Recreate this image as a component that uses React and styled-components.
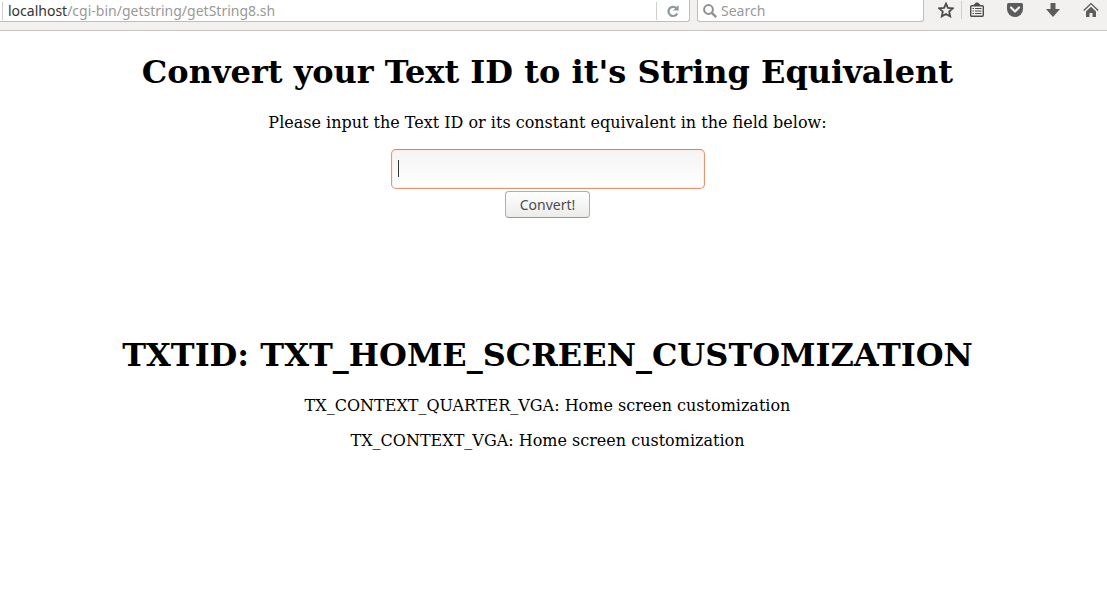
import React from "react";
import styled, { createGlobalStyle } from "styled-components";

const GlobalStyle = createGlobalStyle`
  * { box-sizing: border-box; }
  body {
    margin: 0;
    background: #fff;
    color: #000;
    font: 16px/19px "DejaVu Serif", serif;
  }
`;

const ui = `"Noto Sans", "Open Sans", sans-serif`;

const Toolbar = styled.header`
  display: flex;
  align-items: flex-start;
  height: 31px;
  background: #f2f1f0;
  border-bottom: 1px solid #c6c3c0;
  font: 14px/20px ${ui};
`;

const Field = styled.div`
  display: flex;
  align-items: center;
  height: 22px;
  background: #fff;
  border: 1px solid #c0bdba;
  border-top: 0;
  border-radius: 0 0 3px 3px;
`;

const AddressBar = styled(Field)`
  flex: 1;
  min-width: 0;
  border-left: 0;
  border-bottom-left-radius: 0;
`;

const SearchBar = styled(Field)`
  width: 227px;
  margin-left: 7px;
  padding-left: 4px;
  gap: 3px;
`;

const Divider = styled.span`
  flex: none;
  width: 1px;
  height: 18px;
  margin-left: ${(p) => p.$before || 0}px;
  background: #d0cecc;
`;

const Host = styled.label`
  padding-left: 5px;
  color: #333;
`;

const BarInput = styled.input`
  flex: 1;
  min-width: 0;
  height: 20px;
  padding: 0;
  border: 0;
  outline: 0;
  background: none;
  color: #999;
  font: inherit;

  &::placeholder {
    color: #999;
    opacity: 1;
  }
`;

const IconButton = styled.button`
  display: flex;
  flex: none;
  align-items: center;
  justify-content: center;
  width: ${(p) => p.$width || 16}px;
  height: 20px;
  padding: 0;
  border: 0;
  background: none;
  color: ${(p) => p.$color || "#4c4c4c"};
`;

const Actions = styled.nav`
  display: flex;
  align-items: center;
  gap: 22px;
  height: 20px;
  padding: 0 8px 0 14px;
`;

const BookmarkGroup = styled.div`
  display: flex;
  align-items: center;
  gap: 7px;
`;

const Page = styled.main`
  padding: 22px 12px 0 0;
  text-align: center;
`;

const Title = styled.h1`
  margin: 0 0 22px;
  font-size: 32px;
  line-height: 38px;
  font-weight: bold;
`;

const Line = styled.p`
  margin: 0 0 16px;
`;

const Form = styled.form`
  display: flex;
  flex-direction: column;
  align-items: center;
  gap: 2px;
  margin-bottom: 118px;
`;

const Prompt = styled.label`
  margin-bottom: 15px;
`;

const TextInput = styled.input`
  width: 314px;
  height: 40px;
  padding: 0 6px;
  border: 1px solid #e6936f;
  border-top-color: #dc8461;
  border-radius: 5px;
  outline: 0;
  box-shadow: inset 0 0 0 1px #fbeee8;
  background:
    linear-gradient(#333, #333) 6px 10px / 1px 17px no-repeat,
    linear-gradient(#f4f4f4, #fff);
  caret-color: transparent;
  font: 15px/20px ${ui};
`;

const Submit = styled.button`
  width: 85px;
  height: 27px;
  padding: 0;
  border: 1px solid #b0aeac;
  border-bottom-color: #989694;
  border-radius: 4px;
  background: linear-gradient(#fff, #ececeb);
  color: #4c4c4c;
  font: 14px/20px ${ui};
`;

const Svg = ({ children }) => (
  <svg width="16" height="16" viewBox="0 0 16 16" fill="none" aria-hidden="true">
    {children}
  </svg>
);

const ReloadIcon = () => (
  <Svg>
    <path d="M11.4 5.2A4.6 4.6 0 1 0 12.2 10.4" stroke="currentColor" strokeWidth="2.2" />
    <path d="M13.6 2v5.6H8z" fill="currentColor" />
  </Svg>
);

const SearchIcon = () => (
  <Svg>
    <circle cx="6.5" cy="6.5" r="4.4" stroke="#8f8f8f" strokeWidth="2" />
    <path d="M9.8 9.8l4.4 4.4" stroke="#8f8f8f" strokeWidth="2.4" />
  </Svg>
);

const StarIcon = () => (
  <Svg>
    <path
      d="M8 1.6l1.9 4.2 4.9.5-3.6 3.3 1 4.8L8 12l-4.2 2.4 1-4.8L1.2 6.3l4.9-.5z"
      stroke="currentColor"
      strokeWidth="1.8"
    />
  </Svg>
);

const BookmarksIcon = () => (
  <Svg>
    <path d="M4.500 4V3L7 .5h2L11.500 3v1" fill="currentColor" />
    <rect x="1.700" y="3.700" width="12.600" height="10.600" rx="1" stroke="currentColor" strokeWidth="1.400" />
    <path d="M3.500 6.500H5M3.500 9H5M3.500 11.500H5M6 6.500h6.500M6 9h6.500M6 11.500h6.500" stroke="currentColor" strokeWidth="1" />
  </Svg>
);

const PocketIcon = () => (
  <Svg>
    <path d="M1.500 1h13Q16 1 16 2.500V7A8 8 0 0 1 0 7V2.500Q0 1 1.500 1z" fill="#5c5c5c" />
    <path d="M4 5.500l4 4 4-4" stroke="#f2f1f0" strokeWidth="2.200" strokeLinecap="round" strokeLinejoin="round" />
  </Svg>
);

const DownloadIcon = () => (
  <Svg>
    <path d="M5.500 1h5v6H15l-7 8-7-8h4.500z" fill="#5c5c5c" />
  </Svg>
);

const HomeIcon = () => (
  <Svg>
    <path d="M.8 8.500L8 1.600l7.200 6.900" stroke="#5c5c5c" strokeWidth="1.400" />
    <path d="M3 9.500l5-4.700 5 4.700V15H9.500v-4h-3v4H3z" fill="#5c5c5c" />
  </Svg>
);

export default function App() {
  return (
    <>
      <GlobalStyle />
      <Toolbar>
        <AddressBar>
          <Divider $before={2} />
          <Host htmlFor="address">localhost</Host>
          <BarInput id="address" defaultValue="/cgi-bin/getstring/getString8.sh" />
          <Divider />
          <IconButton type="button" aria-label="Reload" $width={32} $color="#8c979e">
            <ReloadIcon />
          </IconButton>
        </AddressBar>
        <SearchBar>
          <SearchIcon />
          <BarInput type="search" aria-label="Search" placeholder="Search" />
        </SearchBar>
        <Actions>
          <BookmarkGroup>
            <IconButton type="button" aria-label="Bookmark this page">
              <StarIcon />
            </IconButton>
            <Divider />
            <IconButton type="button" aria-label="Show bookmarks">
              <BookmarksIcon />
            </IconButton>
          </BookmarkGroup>
          <IconButton type="button" aria-label="Save to Pocket">
            <PocketIcon />
          </IconButton>
          <IconButton type="button" aria-label="Downloads">
            <DownloadIcon />
          </IconButton>
          <IconButton type="button" aria-label="Home">
            <HomeIcon />
          </IconButton>
        </Actions>
      </Toolbar>
      <Page>
        <Title>Convert your Text ID to it's String Equivalent</Title>
        <Form onSubmit={(e) => e.preventDefault()}>
          <Prompt htmlFor="text-id">
            Please input the Text ID or its constant equivalent in the field below:
          </Prompt>
          <TextInput id="text-id" />
          <Submit type="submit">Convert!</Submit>
        </Form>
        <Title>TXTID: TXT_HOME_SCREEN_CUSTOMIZATION</Title>
        <Line>TX_CONTEXT_QUARTER_VGA: Home screen customization</Line>
        <Line>TX_CONTEXT_VGA: Home screen customization</Line>
      </Page>
    </>
  );
}
